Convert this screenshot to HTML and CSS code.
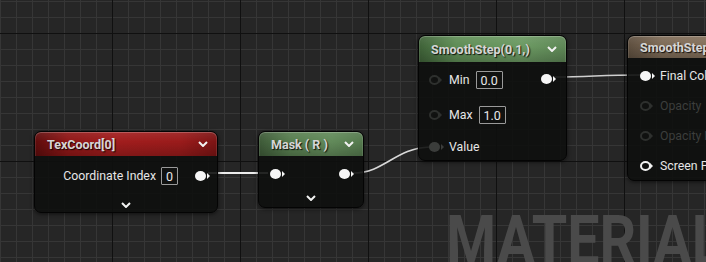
FILE: index.html
```html
<!DOCTYPE html>
<html>
<head>
<meta charset="utf-8">
<link rel="stylesheet" href="styles.css">
</head>
<body>
<div class="canvas">
  <div class="watermark">MATERIAL</div>
  <svg class="wires" width="706" height="262" viewBox="0 0 706 262">
    <path d="M208 173 L268 173" stroke="#ececec" stroke-width="2.2" fill="none"/>
    <path d="M353 173 C 385 173, 395 148, 430 147" stroke="#d8d8d8" stroke-width="1.6" fill="none"/>
    <path d="M554 77 C 590 77, 600 75, 640 75" stroke="#cfcfcf" stroke-width="1.6" fill="none"/>
  </svg>

  <div class="node n-tex">
    <div class="header red">
      <span class="title">TexCoord[0]</span>
      <svg class="chev" width="10" height="6" viewBox="0 0 10 6"><polyline points="1,1 5,5 9,1" fill="none" stroke="#f2f2f2" stroke-width="2"/></svg>
    </div>
    <div class="tex-body">
      <div class="tex-row">
        <span class="label">Coordinate Index</span>
        <span class="val">0</span>
        <span class="pin filled"></span>
      </div>
      <div class="more">
        <svg width="10" height="6" viewBox="0 0 10 6"><polyline points="1,1 5,5 9,1" fill="none" stroke="#f2f2f2" stroke-width="2"/></svg>
      </div>
    </div>
  </div>

  <div class="node n-mask">
    <div class="header green-dark">
      <span class="title">Mask ( R )</span>
      <svg class="chev" width="10" height="6" viewBox="0 0 10 6"><polyline points="1,1 5,5 9,1" fill="none" stroke="#f2f2f2" stroke-width="2"/></svg>
    </div>
    <div class="mask-body">
      <div class="mask-row">
        <span class="pin filled"></span>
        <span class="pin filled"></span>
      </div>
      <div class="more">
        <svg width="10" height="6" viewBox="0 0 10 6"><polyline points="1,1 5,5 9,1" fill="none" stroke="#f2f2f2" stroke-width="2"/></svg>
      </div>
    </div>
  </div>

  <div class="node n-smooth">
    <div class="header green">
      <span class="title">SmoothStep(0,1,)</span>
      <svg class="chev" width="10" height="6" viewBox="0 0 10 6"><polyline points="1,1 5,5 9,1" fill="none" stroke="#f2f2f2" stroke-width="2"/></svg>
    </div>
    <div class="smooth-body">
      <div class="inputs">
        <div class="in-row r-min"><span class="pin hollow"></span><span class="label">Min</span><span class="val">0.0</span></div>
        <div class="in-row r-max"><span class="pin hollow"></span><span class="label">Max</span><span class="val">1.0</span></div>
        <div class="in-row r-value"><span class="pin grey"></span><span class="label">Value</span></div>
      </div>
      <div class="outputs">
        <span class="pin filled"></span>
      </div>
    </div>
  </div>

  <div class="node n-result">
    <div class="header tan">
      <span class="title">SmoothStep</span>
    </div>
    <div class="result-body">
      <div class="res-row"><span class="pin filled"></span><span class="label">Final Color</span></div>
      <div class="res-row dim"><span class="pin hollow"></span><span class="label">Opacity</span></div>
      <div class="res-row dim"><span class="pin hollow"></span><span class="label">Opacity Mask</span></div>
      <div class="res-row"><span class="pin ring"></span><span class="label">Screen Position</span></div>
    </div>
  </div>
</div>
</body>
</html>
```

FILE: styles.css
```css
* { box-sizing: border-box; }

body {
  margin: 0;
  background: #262626;
  font-family: Roboto, "Noto Sans", "Liberation Sans", sans-serif;
}

.canvas {
  position: relative;
  width: 706px;
  height: 262px;
  overflow: hidden;
  background-color: #262626;
  background-image:
    linear-gradient(90deg, #101010 1px, transparent 1px),
    linear-gradient(180deg, #101010 1px, transparent 1px),
    linear-gradient(90deg, #363636 1px, transparent 1px),
    linear-gradient(180deg, #363636 1px, transparent 1px);
  background-size: 128px 100%, 100% 128px, 16px 100%, 100% 16px;
  background-position: 112px 0, 0 33px, 0 0, 0 1px;
}

.watermark {
  position: absolute;
  left: 446px;
  top: 206px;
  font-size: 69px;
  line-height: 69px;
  font-weight: 700;
  color: #4a4a4a;
  white-space: nowrap;
  transform: scaleX(0.83);
  transform-origin: left top;
}

.wires {
  position: absolute;
  left: 0;
  top: 0;
}

.node {
  position: absolute;
  background: rgba(14, 16, 14, 0.9);
  border: 1px solid #040404;
  border-radius: 7px;
  box-shadow: 0 1px 4px rgba(0, 0, 0, 0.6);
  color: #e6e6e6;
  font-size: 12.3px;
}

.header {
  height: 24px;
  display: flex;
  align-items: center;
  justify-content: space-between;
  padding: 0 9px 0 12px;
  border-radius: 6px 6px 0 0;
  box-shadow: inset 0 1px 0 rgba(255, 255, 255, 0.22), inset 1px 0 0 rgba(255,255,255,0.1), inset -1px 0 0 rgba(255,255,255,0.1);
}

.title {
  font-weight: 700;
  font-size: 12.5px;
  color: #d6d6d6;
  text-shadow: 1px 1px 1px rgba(0, 0, 0, 0.85);
  white-space: nowrap;
}

.chev { display: block; }

.red {
  background:
    linear-gradient(180deg, rgba(255,255,255,0.08) 0%, rgba(0,0,0,0) 40%, rgba(0,0,0,0.2) 100%),
    linear-gradient(90deg, #5e0c0c 0%, #8f1717 18%, #a11d1d 45%, #9a1b1b 80%, #7c1414 100%);
}
.green-dark {
  background:
    linear-gradient(180deg, rgba(255,255,255,0.08) 0%, rgba(0,0,0,0) 40%, rgba(0,0,0,0.2) 100%),
    linear-gradient(90deg, #3e5a38 0%, #587e50 30%, #628a5a 70%, #557a4e 100%);
}
.green {
  background:
    linear-gradient(180deg, rgba(255,255,255,0.08) 0%, rgba(0,0,0,0) 40%, rgba(0,0,0,0.2) 100%),
    linear-gradient(90deg, #3f6238 0%, #5f8d56 25%, #6c9a63 70%, #5e8756 100%);
}
.tan {
  background:
    linear-gradient(180deg, rgba(255,255,255,0.08) 0%, rgba(0,0,0,0) 40%, rgba(0,0,0,0.2) 100%),
    linear-gradient(90deg, #5f5040 0%, #7f6c58 25%, #8c7862 100%);
  height: 22px;
}

.label { white-space: nowrap; }

.val {
  display: inline-flex;
  align-items: center;
  justify-content: center;
  height: 18px;
  padding: 0 4px;
  border: 1px solid #9a9a9a;
  border-radius: 1px;
  font-size: 12.5px;
  color: #e8e8e8;
}

/* pins */
.pin {
  position: relative;
  display: inline-block;
  width: 11px;
  height: 10px;
  border-radius: 50%;
  flex: none;
}
.pin::after {
  content: "";
  position: absolute;
  right: -4px;
  top: 50%;
  margin-top: -3px;
  border-left: 3px solid currentColor;
  border-top: 3px solid transparent;
  border-bottom: 3px solid transparent;
}
.pin.filled { background: #f6f6f6; color: #f6f6f6; }
.pin.hollow { border: 2px solid #2e302e; color: #2e302e; }
.pin.grey { background: #3b3d3b; color: #3b3d3b; }
.pin.ring { border: 2px solid #f2f2f2; color: #f2f2f2; }

.more {
  display: flex;
  justify-content: center;
}

/* TexCoord */
.n-tex {
  left: 34px;
  top: 131px;
  width: 184px;
  height: 82px;
}
.tex-body {
  padding-top: 11px;
}
.tex-row {
  display: flex;
  align-items: center;
  justify-content: flex-end;
  padding-right: 11px;
  height: 18px;
}
.tex-row .val { margin-left: 5px; width: 17px; padding: 0; }
.tex-row .pin { margin-left: 17px; }
.tex-body .more { margin-top: 17px; }

/* Mask */
.n-mask {
  left: 258px;
  top: 131px;
  width: 106px;
  height: 77px;
}
.mask-body { padding-top: 13px; }
.mask-row {
  display: flex;
  justify-content: space-between;
  padding: 0 13px 0 11px;
  height: 10px;
}
.mask-body .more { margin-top: 16px; }

/* SmoothStep */
.n-smooth {
  left: 418px;
  top: 35px;
  width: 149px;
  height: 126px;
}
.n-smooth .header { height: 26px; }
.smooth-body {
  display: flex;
  justify-content: space-between;
}
.inputs {
  display: flex;
  flex-direction: column;
  padding-left: 10px;
  padding-top: 9px;
}
.in-row {
  display: flex;
  align-items: center;
  height: 18px;
}
.in-row .pin { margin-right: 9px; }
.in-row .val { margin-left: 6px; }
.r-max { margin-top: 17px; }
.r-value { margin-top: 14px; }
.outputs {
  padding-top: 11px;
  padding-right: 14px;
}

/* Result node */
.n-result {
  left: 627px;
  top: 35px;
  width: 140px;
  height: 146px;
}
.result-body {
  display: flex;
  flex-direction: column;
  padding-top: 9px;
  padding-left: 12px;
}
.res-row {
  display: flex;
  align-items: center;
  height: 18px;
  margin-bottom: 12px;
}
.res-row .pin { margin-right: 9px; }
.res-row.dim .label { color: #3c3e3c; }
```
